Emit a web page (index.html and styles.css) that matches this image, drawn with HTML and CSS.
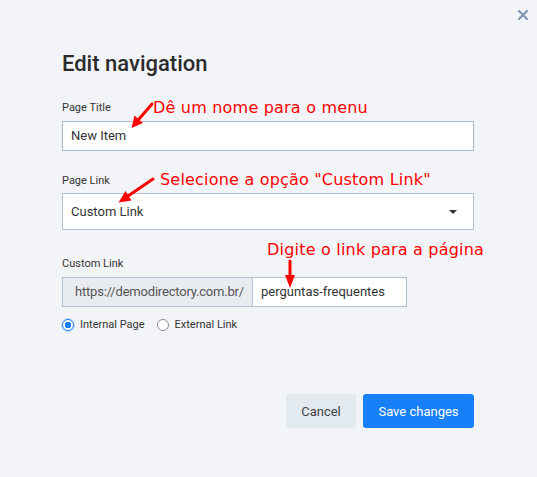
FILE: index.html
```html
<!DOCTYPE html>
<html>
<head>
<meta charset="utf-8">
<link rel="stylesheet" href="styles.css">
</head>
<body>
<div class="page">
  <button class="close" aria-label="Close">
    <svg width="10" height="10" viewBox="0 0 10 10"><path d="M1 1L9 9M9 1L1 9" stroke="#7f97b4" stroke-width="2.2" stroke-linecap="square"/></svg>
  </button>
  <div class="dialog">
    <h1 class="title">Edit navigation</h1>

    <div class="field field-title">
      <label class="label">Page Title</label>
      <div class="input">New Item</div>
    </div>

    <div class="field field-link">
      <label class="label">Page Link</label>
      <div class="select">
        <span>Custom Link</span>
        <span class="caret"></span>
      </div>
    </div>

    <div class="field field-custom">
      <label class="label">Custom Link</label>
      <div class="group">
        <span class="prefix">https://demodirectory.com.br/</span>
        <span class="suffix">perguntas-frequentes</span>
      </div>
    </div>

    <div class="radios">
      <span class="radio"><span class="dot checked"></span>Internal Page</span>
      <span class="radio"><span class="dot"></span>External Link</span>
    </div>

    <div class="actions">
      <button class="btn btn-cancel">Cancel</button>
      <button class="btn btn-save">Save changes</button>
    </div>
  </div>

  <div class="note note1">Dê um nome para o menu</div>
  <div class="note note2">Selecione a opção "Custom Link"</div>
  <div class="note note3">Digite o link para a página</div>
  <svg class="arrows" width="537" height="477" viewBox="0 0 537 477">
    <g stroke="#ff0000" stroke-width="3" stroke-linecap="round" fill="#ff0000">
      <line x1="152" y1="104" x2="139" y2="119"/>
      <line x1="153" y1="179" x2="128" y2="196"/>
      <line x1="290" y1="261" x2="290" y2="276"/>
    </g>
    <g fill="#ff0000">
      <polygon points="131.5,128 143,123 134.5,115.5"/>
      <polygon points="118.5,202.5 131.5,200.5 125.5,191"/>
      <polygon points="285,275 295,275 290,288"/>
    </g>
  </svg>
</div>
</body>
</html>
```

FILE: styles.css
```css
html, body {
  margin: 0;
  padding: 0;
  background: #f3f4f8;
}

body {
  font-family: Roboto, "Liberation Sans", sans-serif;
  color: #333;
}

.page {
  position: relative;
  width: 537px;
  height: 477px;
  overflow: hidden;
}

.close {
  position: absolute;
  top: 10px;
  right: 9px;
  width: 10px;
  height: 10px;
  padding: 0;
  border: 0;
  background: none;
  line-height: 0;
}

.dialog {
  padding: 50px 63px 0 62px;
  display: flex;
  flex-direction: column;
}

.title {
  margin: 0;
  font-size: 22px;
  font-weight: 500;
  line-height: 28px;
  color: #2b2b2b;
}

.field {
  display: flex;
  flex-direction: column;
}

.label {
  font-size: 11px;
  line-height: 14px;
  color: #333;
  margin-bottom: 6px;
}

.field-title { margin-top: 23px; }
.field-link { margin-top: 23px; }
.field-link .label { margin-bottom: 5px; }
.field-custom { margin-top: 27px; }

.input {
  box-sizing: border-box;
  height: 30px;
  border: 1px solid #a9b7cb;
  background: #fff;
  padding: 0 8px;
  font-size: 13px;
  line-height: 28px;
  color: #333;
}

.select {
  box-sizing: border-box;
  height: 37px;
  border: 1px solid #b3c0d2;
  background: #fff;
  padding: 0 16px 0 8px;
  font-size: 13px;
  display: flex;
  align-items: center;
  justify-content: space-between;
  color: #333;
}

.caret {
  width: 0;
  height: 0;
  border-left: 4px solid transparent;
  border-right: 4px solid transparent;
  border-top: 4px solid #333;
  margin-top: 1px;
}

.group {
  display: flex;
  height: 30px;
}

.prefix {
  box-sizing: border-box;
  width: 191px;
  height: 30px;
  background: #e8ebf0;
  border: 1px solid #b3c0d2;
  padding-left: 12px;
  font-size: 13px;
  line-height: 28px;
  letter-spacing: -0.2px;
  color: #555;
}

.suffix {
  box-sizing: border-box;
  width: 154px;
  height: 30px;
  background: #fff;
  border: 1px solid #b3c0d2;
  border-left: 0;
  padding-left: 8px;
  font-size: 13px;
  line-height: 28px;
  color: #333;
}

.radios {
  display: flex;
  align-items: center;
  gap: 12px;
  margin-top: 9px;
  height: 16px;
  font-size: 11px;
  color: #333;
}

.radio {
  display: flex;
  align-items: center;
  gap: 6px;
}

.dot {
  box-sizing: border-box;
  width: 12px;
  height: 12px;
  border-radius: 50%;
  border: 1px solid #8f8f8f;
  background: #fff;
  margin-top: 2px;
}

.dot.checked {
  border: 1.5px solid #1a7ef7;
  background: radial-gradient(circle, #1a7ef7 0 3px, #fff 3.5px);
  box-shadow: 0 0 0 1px rgba(26, 126, 247, 0.25);
}

.actions {
  display: flex;
  justify-content: flex-end;
  gap: 7px;
  margin-top: 62px;
}

.btn {
  height: 34px;
  border: 0;
  border-radius: 3px;
  font-family: Roboto, "Liberation Sans", sans-serif;
  font-size: 13px;
  padding: 0;
}

.btn-cancel {
  width: 70px;
  background: #e2e9ef;
  color: #444;
}

.btn-save {
  width: 111px;
  background: #177ff7;
  color: #fff;
}

.note {
  position: absolute;
  font-family: "DejaVu Sans", sans-serif;
  font-size: 16px;
  line-height: 16px;
  letter-spacing: 0.2px;
  color: #ff0000;
  white-space: nowrap;
}

.note1 { left: 153px; top: 100px; }
.note2 { left: 160px; top: 172px; }
.note3 { left: 267px; top: 242px; }

.arrows {
  position: absolute;
  left: 0;
  top: 0;
  pointer-events: none;
}
```
